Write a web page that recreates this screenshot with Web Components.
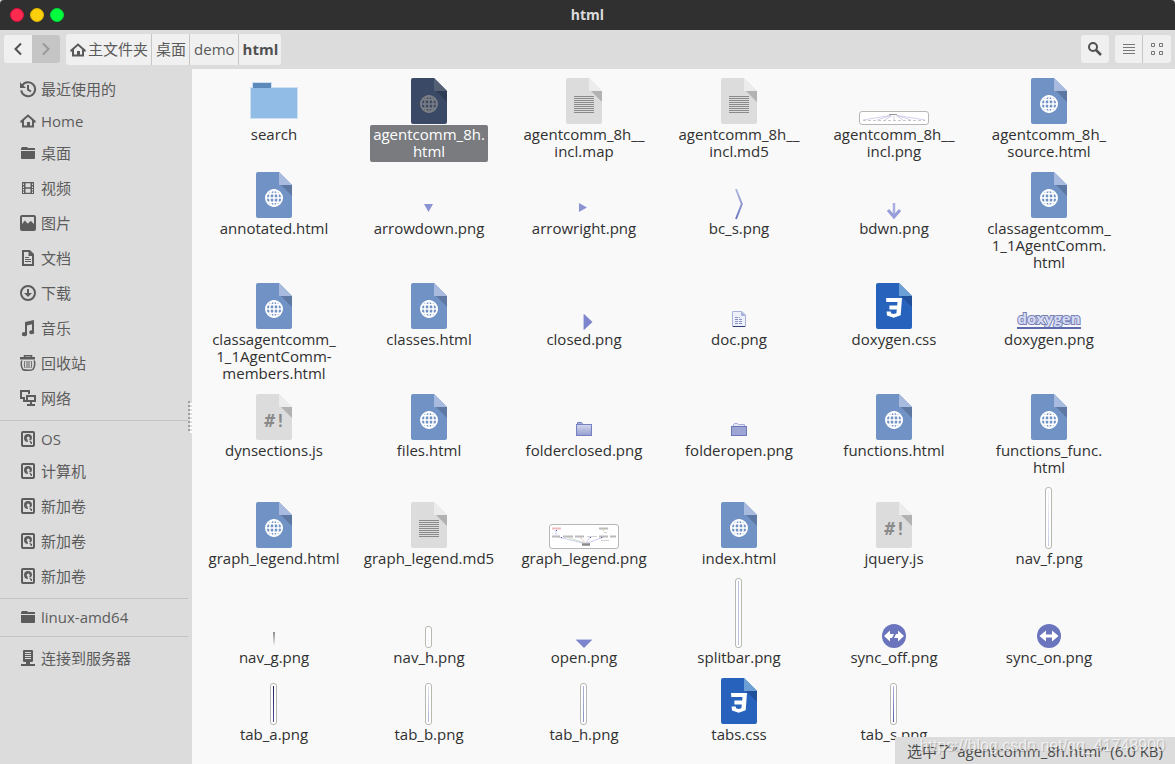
<!DOCTYPE html>
<html lang="zh-CN">
<head>
<meta charset="utf-8">
<title>html</title>
<style>
  html, body { margin: 0; height: 100%; }
  body {
    background: #d4d4d4;
    color: #303030;
    font: 15px/17px "Open Sans", "Noto Sans CJK SC", sans-serif;
  }
</style>
</head>
<body>
<file-window>
  <title-bar slot="title">html</title-bar>
  <tool-bar slot="tools"></tool-bar>
  <places-list slot="places">
    <place-item icon="recent">最近使用的</place-item>
    <place-item icon="home" compact>Home</place-item>
    <place-item icon="folder">桌面</place-item>
    <place-item icon="video">视频</place-item>
    <place-item icon="picture">图片</place-item>
    <place-item icon="document">文档</place-item>
    <place-item icon="download">下载</place-item>
    <place-item icon="music">音乐</place-item>
    <place-item icon="trash">回收站</place-item>
    <place-item icon="network">网络</place-item>
    <place-divider></place-divider>
    <place-item icon="disk" compact>OS</place-item>
    <place-item icon="disk">计算机</place-item>
    <place-item icon="disk">新加卷</place-item>
    <place-item icon="disk">新加卷</place-item>
    <place-item icon="disk">新加卷</place-item>
    <place-divider></place-divider>
    <place-item icon="folder" compact>linux-amd64</place-item>
    <place-divider></place-divider>
    <place-item icon="server">连接到服务器</place-item>
  </places-list>
  <file-grid>
    <file-item icon="dir">search</file-item>
    <file-item icon="html" selected>agentcomm_8h.<br>html</file-item>
    <file-item icon="text">agentcomm_8h__<br>incl.map</file-item>
    <file-item icon="text">agentcomm_8h__<br>incl.md5</file-item>
    <file-item icon="incl">agentcomm_8h__<br>incl.png</file-item>
    <file-item icon="html">agentcomm_8h_<br>source.html</file-item>

    <file-item icon="html">annotated.html</file-item>
    <file-item icon="arrowdown">arrowdown.png</file-item>
    <file-item icon="arrowright">arrowright.png</file-item>
    <file-item icon="crumb">bc_s.png</file-item>
    <file-item icon="bdwn">bdwn.png</file-item>
    <file-item icon="html">classagentcomm_<br>1_1AgentComm.<br>html</file-item>

    <file-item icon="html">classagentcomm_<br>1_1AgentComm-<br>members.html</file-item>
    <file-item icon="html">classes.html</file-item>
    <file-item icon="closed">closed.png</file-item>
    <file-item icon="doc">doc.png</file-item>
    <file-item icon="css">doxygen.css</file-item>
    <file-item icon="doxygen">doxygen.png</file-item>

    <file-item icon="script">dynsections.js</file-item>
    <file-item icon="html">files.html</file-item>
    <file-item icon="folderclosed">folderclosed.png</file-item>
    <file-item icon="folderopen">folderopen.png</file-item>
    <file-item icon="html">functions.html</file-item>
    <file-item icon="html">functions_func.<br>html</file-item>

    <file-item icon="html">graph_legend.html</file-item>
    <file-item icon="text">graph_legend.md5</file-item>
    <file-item icon="legend">graph_legend.png</file-item>
    <file-item icon="html">index.html</file-item>
    <file-item icon="script">jquery.js</file-item>
    <file-item icon="navf">nav_f.png</file-item>

    <file-item icon="navg">nav_g.png</file-item>
    <file-item icon="navh">nav_h.png</file-item>
    <file-item icon="open">open.png</file-item>
    <file-item icon="splitbar">splitbar.png</file-item>
    <file-item icon="syncoff">sync_off.png</file-item>
    <file-item icon="syncon">sync_on.png</file-item>

    <file-item icon="taba">tab_a.png</file-item>
    <file-item icon="tabb">tab_b.png</file-item>
    <file-item icon="tabh">tab_h.png</file-item>
    <file-item icon="css">tabs.css</file-item>
    <file-item icon="tabs">tab_s.png</file-item>
  </file-grid>
  <status-bar slot="status">选中了“agentcomm_8h.html” (6.0 KB)</status-bar>
  <water-mark slot="status">https://blog.csdn.net/qq_41748900</water-mark>
</file-window>

<script>
  /* A sheet of paper with a folded corner, shared by the file types. */
  const page = (base, fold, shade, art) => [48, 48,
    `<path fill="${base}" d="M8 1H29L42 14V45a2 2 0 0 1-2 2H8a2 2 0 0 1-2-2V3a2 2 0 0 1 2-2z"/>
     <path fill="${fold}" d="M29 1V14H42z"/><path fill="${shade}" d="M31 14H42V25z"/>${art}`];

  const globe = c => `<g fill="none" stroke="${c}" stroke-width="1.5">
    <circle cx="24" cy="27" r="8.1" stroke-width="1.8"/><ellipse cx="24" cy="27" rx="4.2" ry="8.2"/>
    <path d="M24 19V35M16 27H32M17 22.8H31M17 31.2H31"/></g>`;

  /* A framed narrow thumbnail with a vertical stripe inside. */
  const strip = (h, top, bottom) => [8, h,
    `<defs><linearGradient id="g" x2="0" y2="1"><stop stop-color="${top}"/><stop offset="1" stop-color="${bottom}"/></linearGradient></defs>
     <rect x=".5" y=".5" width="6" height="${h - 1}" rx="2.5" fill="#fff" stroke="#b6b9b2"/>
     <rect x="3" y="3" width="1" height="${h - 6}" fill="url(#g)"/>`];

  const frame = (h, art) => [70, h,
    `<rect x=".5" y=".5" width="69" height="${h - 1}" rx="2.5" fill="#fff" stroke="#b6b9b2"/>${art}`];

  const lilac = `<defs><linearGradient id="l" x2="0" y2="1"><stop stop-color="#d3d8ee"/><stop offset="1" stop-color="#949dd0"/></linearGradient></defs>`;
  const css3 = `<path fill="#fff" d="M16 16H32L30.7 33.2 23.7 35.8 17 33.4 16.6 29.4H20.8L21 31.2 23.7 32 26.4 31.2 26.8 27.6H19.4V23.6H27.2L27.5 20H16.3z"/>`;
  const lines = [...Array(9)].map((_, i) => `M14 ${19.5 + 2 * i}H34`).join('');

  const ICONS = {
    home: [16, 16, `<path fill="none" stroke="currentColor" stroke-width="2" d="M1 8.7 8 2.6 15 8.7M3 7.5V13.5H13V7.5"/><path fill="currentColor" d="M7 9h3v5H7zM1 7.5h3v2H0zM12 7.5h3l1 2h-4z"/>`],
    recent: [16, 16, `<path fill="none" stroke="currentColor" stroke-width="2" d="M2.2 4.5A7 7 0 1 1 1.2 9.4M8 4V8.6L11 10.5"/><path fill="currentColor" d="M0 1V7H6L4.2 5.2 2.2 3.4z"/>`],
    folder: [16, 16, `<path fill="currentColor" d="M1 3.5 2 2H7L8 3H15V5H1zM1 6H15V13.3a.7.7 0 0 1-.7.7H1.7a.7.7 0 0 1-.7-.7z"/>`],
    video: [16, 16, `<path fill="currentColor" fill-rule="evenodd" d="M2 2H14V14H2zM3 3.4V5H4V3.4zM3 6.4V8H4V6.4zM3 9V10.500H4V9zM3 11.500V13H4V11.500zM12 3.400V5H13V3.400zM12 6.400V8H13V6.400zM12 9V10.500H13V9zM12 11.500V13H13V11.500zM5.500 3.200V7.200H10.500V3.200zM5.500 8.800V12.800H10.500V8.800z"/>`],
    picture: [16, 16, `<path fill="currentColor" fill-rule="evenodd" d="M2 0H14a2 2 0 0 1 2 2V14a2 2 0 0 1-2 2H2a2 2 0 0 1-2-2V2A2 2 0 0 1 2 0zM2 2V9L4 6.500 5 5.500 7 8 8 8.500 10 6.500 11 6 14 9V2z"/>`],
    document: [16, 16, `<path fill="none" stroke="currentColor" stroke-width="2" d="M3 1H9.500L13 4.500V15H3z"/><path fill="currentColor" d="M8.500 1V6H13.500zM5 7H9V8H5zM5 9H11V10H5zM5 11H11V12H5z"/>`],
    download: [16, 16, `<circle cx="8" cy="8" r="7" fill="none" stroke="currentColor" stroke-width="2"/><path fill="currentColor" d="M7 4H9V8H12L8 12 4 8H7z"/>`],
    music: [16, 16, `<path fill="currentColor" d="M5 2 14 0V11.500A2.500 2 0 1 1 12 10.200V4.300L7 5.500V13.800A2.600 2.100 0 1 1 5 12.200z"/>`],
    trash: [16, 16, `<path fill="none" stroke="currentColor" stroke-width="1.500" d="M4.500 2V.8H11.500V2M1.800 5.500C.8 8 1.500 12 2.800 14.500 4.500 15.600 11.500 15.600 13 14.500 14.500 12 15 8 14.200 5.500"/><path fill="none" stroke="currentColor" d="M5 6C4 8 4.300 11 5 13M11 6C12 8 11.700 11 11 13M7 6V13M9 6V13"/><path fill="currentColor" d="M0 2H15V4.500H0z"/>`],
    network: [16, 16, `<path fill="none" stroke="currentColor" stroke-width="2" d="M5 8H1V1H9V4M7 6H15V11H7zM3 11H6M11 11V15M7 15H15"/><path fill="currentColor" d="M3 8H5V11H3z"/>`],
    disk: [16, 16, `<rect x="2" y="1" width="12" height="14" rx="1" fill="none" stroke="currentColor" stroke-width="2"/><path fill="currentColor" fill-rule="evenodd" d="M8 3a4 4 0 0 1 4 4L11 9.500 9 8.500A1.500 1.500 0 1 0 7.500 8.500L8 11A4 4 0 0 1 8 3zM9 9.500 12 11V13H11z"/>`],
    server: [16, 16, `<path fill="currentColor" fill-rule="evenodd" d="M4 0H12a1 1 0 0 1 1 1V11a1 1 0 0 1-1 1H10V14H15V16H1V14H6V12H4a1 1 0 0 1-1-1V1A1 1 0 0 1 4 0zM5 2V3H11V2zM5 4V5H11V4zM5 6V7H11V6zM5 8V9H11V8z"/>`],
    back: [16, 16, `<path fill="none" stroke="currentColor" stroke-width="2" d="M11 2.500 5.500 8 11 13.500"/>`],
    forward: [16, 16, `<path fill="none" stroke="currentColor" stroke-width="2" d="M5 2.500 10.500 8 5 13.500"/>`],
    find: [16, 16, `<circle cx="6" cy="6" r="4" fill="none" stroke="currentColor" stroke-width="2"/><path stroke="currentColor" stroke-width="2.500" d="M9 9 14 14"/>`],
    list: [16, 16, `<path stroke="currentColor" d="M2 3.500H14M2 6.500H14M2 9.500H14M2 12.500H14"/>`],
    tiles: [16, 16, `<path fill="none" stroke="currentColor" d="M2.500 2.500H5.500V5.500H2.500zM10.500 2.500H13.500V5.500H10.500zM2.500 10.500H5.500V13.500H2.500zM10.500 10.500H13.500V13.500H10.500z"/>`],

    dir: [48, 48, `<path fill="#cfe0f2" d="M2 5H22V10H48V42H0V10H2z"/><path fill="#5b89b9" d="M3 6H21V11H3z"/><path fill="#91bce6" d="M1 11H47V41H1z"/>`],
    html: page('#7092c5', '#a8bbdf', '#5d79a3', globe('#fff')),
    'html-selected': page('#3a4a66', '#535f72', '#303c53', globe('#7c7f84')),
    text: page('#dcdcdc', '#ececec', '#b2b2b2', `<path stroke="#8a8a8a" d="${lines}"/>`),
    script: page('#dcdcdc', '#ececec', '#b2b2b2', `<text x="25" y="34" text-anchor="middle" font-family="DejaVu Sans Mono, monospace" font-weight="700" font-size="18" fill="#8a8a8a">#!</text>`),
    css: page('#2762bd', '#6b9fd6', '#1f5099', css3),

    incl: frame(14, `<path fill="none" stroke="#c0bde0" stroke-width=".7" d="M31 4.500 4 9M32 4.500 18 9M33 4.500 26 9M35 4.500V9M37 4.500 44 9M38 4.500 52 9M39 4.500 66 9"/><path stroke="#999" d="M30 3.500H38"/><path stroke="#bbb" stroke-dasharray="3 2" stroke-width=".8" d="M4 9.500H66"/>`),
    legend: frame(25, `<path fill="none" stroke="#9ac79a" stroke-width=".5" d="M35 19 18 13"/><path fill="none" stroke="#9a9ae0" stroke-width=".5" d="M34 19 9 13M37 19 41 13M38 19 55 13M7 11V6"/><path fill="none" stroke="#d68a8a" stroke-width=".5" d="M36 19 31 13"/><path stroke="#eebcbc" stroke-width="2" d="M3 4.500H12"/><path stroke="#bbb" stroke-width="2" d="M50 4.500H59M3 12.500H11M14 12.500H24M26 12.500H35M50 12.500H59M61 12.500H67"/><path stroke="#bbb" stroke-width=".7" d="M38 12.500H48M52 16.500H60M55 8.500H58"/><path stroke="#888" stroke-width="2.500" d="M33 20.500H41"/><path fill="#e8c060" d="M54 6h1v1h-1z"/><path fill="#5555b8" d="M7 6h1v1H7zM41 13h1v1h-1zM12 13h1v1h-1zM52 13h1v1h-1z"/>`),
    arrowdown: [16, 22, `<path fill="#8b93d3" d="M3 7H12L7.500 15z"/>`],
    arrowright: [16, 22, `<path fill="#8b93d3" d="M3 6 11 10.500 3 15z"/>`],
    crumb: [8, 30, `<defs><linearGradient id="c" x2="0" y2="1"><stop stop-color="#b3badf"/><stop offset="1" stop-color="#6974bd"/></linearGradient></defs><path fill="none" stroke="url(#c)" stroke-width="2" d="M1 0 6.800 15 1 30"/>`],
    bdwn: [14, 16, `<path fill="none" stroke="#a9afe0" stroke-width="2.500" d="M7 0V13"/><path fill="none" stroke="#969dd8" stroke-width="3" d="M1 7 7 14 13 7"/>`],
    closed: [20, 16, `<path fill="#c3c8e8" d="M9 0 11 1V15L9 16z"/><path fill="#7d86cd" d="M10 0 18.500 8 10 16z"/>`],
    open: [16, 10, `<path fill="#c3c8e8" d="M0 1H16L15 3H1z"/><path fill="#7d86cd" d="M0 2H16L8 10z"/>`],
    doc: [24, 22, `${lilac}<path fill="#eef1fa" stroke="#a9b2da" d="M5.500 3.500H15L18.500 7V18.500H5.500z"/><path fill="url(#l)" stroke="#a9b2da" d="M14.500 3.500V7.500H18.500"/><path stroke="#8791c4" stroke-dasharray="3 1" d="M8 9.500H13M8 11.500H16M8 13.500H15M8 15.500H16"/><path stroke="#353c78" d="M6 18.500H18"/>`],
    folderclosed: [24, 22, `${lilac}<path fill="#aab1dc" stroke="#7480c0" d="M5.500 6V3.500H9.500L10.500 5"/><rect x="4.500" y="5.500" width="15" height="11" fill="url(#l)" stroke="#7480c0"/>`],
    folderopen: [24, 22, `${lilac}<path fill="#e3e6f5" stroke="#a6aed8" d="M6.500 9V5.500L7.500 4.500H10.500L11.500 5.500H17.500V9"/><rect x="4.500" y="7.500" width="15" height="9" fill="#9ca5d4" stroke="#6d78bb"/>`],
    doxygen: [66, 18, `<text x="33" y="12" text-anchor="middle" font-family="Open Sans, sans-serif" font-weight="700" font-size="15" fill="#d5dbf5" stroke="#7880b4" stroke-width="2" paint-order="stroke">doxygen</text><path fill="#5f69ae" d="M1 15H65V17H1z"/>`],
    navf: strip(62, '#f4f5fb', '#c9cde6'),
    navh: strip(22, '#fdfdff', '#eeeff8'),
    splitbar: strip(70, '#bac2e4', '#bac2e4'),
    taba: strip(42, '#20254f', '#4a5292'),
    tabb: strip(42, '#e0e4f2', '#aeb6da'),
    tabh: strip(42, '#aab3d8', '#8a95c8'),
    tabs: strip(42, '#b0b5da', '#525ba5'),
    navg: [8, 16, `<defs><linearGradient id="n" x2="0" y2="1"><stop stop-color="#8c8c8c"/><stop offset="1" stop-color="#ededed"/></linearGradient></defs><rect x="3" width="2" height="13" fill="url(#n)"/>`],
    syncoff: [24, 24, `<circle cx="12" cy="12" r="12" fill="#6b75bd"/><path fill="#fff" d="M2 12 8 6.500V10H12L10 14H8V17.500zM22 12 16 6.500V10H14L12 14H16V17.500z"/>`],
    syncon: [24, 24, `<circle cx="12" cy="12" r="12" fill="#6b75bd"/><path fill="#fff" d="M2.500 12 9 6.500V10.500H15V6.500L21.500 12 15 17.500V13.500H9V17.500z"/>`]
  };

  /* Registers an element; setup fills in the markup before it is attached. */
  const define = (name, markup, setup) => {
    const template = document.createElement('template');
    template.innerHTML = markup;
    customElements.define(name, class extends HTMLElement {
      connectedCallback() {
        if (this.shadowRoot) return;
        const content = template.content.cloneNode(true);
        if (setup) setup(this, content);
        this.attachShadow({ mode: 'open' }).append(content);
      }
    });
  };

  define('glyph-icon', `<style>
    :host { display: block; flex: none; }
    svg { display: block; overflow: visible; }
  </style><svg aria-hidden="true"></svg>`, (host, content) => {
    const [w, h, art] = ICONS[host.getAttribute('name')];
    const svg = content.querySelector('svg');
    svg.setAttribute('width', w);
    svg.setAttribute('height', h);
    svg.setAttribute('viewBox', `0 0 ${w} ${h}`);
    svg.innerHTML = art;
  });

  define('file-window', `<style>
    :host { display: grid; grid-template: auto auto 1fr / 192px 1fr; min-height: 100vh; position: relative; overflow: hidden; }
    .top { grid-column: 1 / -1; }
    aside { background: #dcdcdc; display: flex; position: relative; }
    .grip { position: absolute; right: 0; top: 332px; width: 4px; height: 32px;
      background: radial-gradient(circle at 1px 1px, #a0a0a0 1px, transparent 1px) 0 0 / 4px 4px,
                  radial-gradient(circle at 3px 3px, #fff 1px, transparent 1px) 0 0 / 4px 4px; }
    main { background: #f9f9f9; }
    footer { position: absolute; right: 0; bottom: 0; }
  </style>
  <div class="top"><slot name="title"></slot></div>
  <div class="top"><slot name="tools"></slot></div>
  <aside><slot name="places"></slot><div class="grip"></div></aside>
  <main><slot></slot></main>
  <footer><slot name="status"></slot></footer>`);

  define('title-bar', `<style>
    :host { display: grid; grid-template-columns: 1fr auto 1fr; align-items: center; height: 30px; background: #303030; border-radius: 4px 4px 0 0; }
    .lights { display: flex; gap: 6px; padding-left: 10px; }
    button { width: 14px; height: 14px; padding: 0; border: 1px solid; border-radius: 50%; }
    .close { background: #ff2a50; border-color: #d81040; }
    .min { background: #fbd00a; border-color: #dcb400; }
    .max { background: #00ff3c; border-color: #00d838; }
    h1 { margin: 0; font-size: 14px; line-height: 20px; font-weight: 700; color: #dcdcdc; }
  </style>
  <div class="lights"><button class="close" aria-label="关闭"></button><button class="min" aria-label="最小化"></button><button class="max" aria-label="最大化"></button></div>
  <h1><slot></slot></h1>`);

  define('tool-bar', `<style>
    :host { display: flex; align-items: center; height: 39px; padding: 0 4px; background: #dcdcdc; color: #505050; box-sizing: border-box; }
    button, nav a { display: flex; align-items: center; justify-content: center; box-sizing: border-box; background: #f0f0f0; color: inherit; }
    button { width: 28px; height: 28px; margin: 0 0 1px; padding: 0; border: 0; border-radius: 3px; }
    .group { display: flex; }
    .group button:first-child { border-radius: 3px 0 0 3px; }
    .group button:last-child { border-radius: 0 3px 3px 0; }
    .group button:disabled { background: #c5c5c5; color: #999; }
    nav { display: flex; margin-left: 6px; border-radius: 3px; overflow: hidden; }
    nav a { height: 31px; padding: 0 3px 0 4px; gap: 2px; text-decoration: none; border-right: 1px solid #c6c6c6; color: #5a5a5a; }
    nav a:last-child { border: 0; font-weight: 700; color: #505050; }
    .right { display: flex; gap: 6px; margin-left: auto; }
    .views button { color: #777; }
    .views button:first-child { border-right: 1px solid #c6c6c6; }
  </style>
  <div class="group"><button aria-label="后退"><glyph-icon name="back"></glyph-icon></button><button aria-label="前进" disabled><glyph-icon name="forward"></glyph-icon></button></div>
  <nav aria-label="路径"><a href="#home"><glyph-icon name="home"></glyph-icon>主文件夹</a><a href="#desktop">桌面</a><a href="#demo">demo</a><a href="#html">html</a></nav>
  <div class="right"><button aria-label="搜索"><glyph-icon name="find"></glyph-icon></button>
  <div class="group views"><button aria-label="列表"><glyph-icon name="list"></glyph-icon></button><button aria-label="图标"><glyph-icon name="tiles"></glyph-icon></button></div></div>`);

  define('places-list', `<style>
    :host { display: block; flex: 1; padding: 3px 4px 0 0; color: #5c5c5c; }
  </style><nav aria-label="位置"><slot></slot></nav>`);

  define('place-item', `<style>
    :host { display: block; }
    a { display: flex; align-items: center; gap: 5px; height: 35px; padding-left: 20px; color: inherit; text-decoration: none; white-space: nowrap; }
    :host([compact]) a { height: 29px; }
    glyph-icon { margin-bottom: 2px; }
  </style><a href="#place"><glyph-icon></glyph-icon><span><slot></slot></span></a>`, (host, content) => {
    content.querySelector('glyph-icon').setAttribute('name', host.getAttribute('icon'));
  });

  define('place-divider', `<style>
    :host { display: block; height: 1px; margin: 4px 0; background: #c3c3c3; }
  </style>`);

  define('file-grid', `<style>
    :host { display: grid; grid-template-columns: repeat(auto-fill, 154px); column-gap: 1px; row-gap: 9px; align-items: baseline; padding: 8px 0 0 5px; }
  </style><slot></slot>`);

  define('file-item', `<style>
    :host { display: flex; flex-direction: column; align-items: center; }
    span { padding: 1px 3px 2px; border-radius: 2px; text-align: center; white-space: nowrap; }
    :host([selected]) span { background: #797b7f; color: #fff; }
  </style><glyph-icon></glyph-icon><span><slot></slot></span>`, (host, content) => {
    const selected = host.hasAttribute('selected') ? '-selected' : '';
    content.querySelector('glyph-icon').setAttribute('name', host.getAttribute('icon') + selected);
  });

  define('status-bar', `<style>
    :host { display: block; padding: 6px 12px 4px; background: #dcdcdc; color: #4c4c4c; white-space: nowrap; }
  </style><slot></slot>`);

  define('water-mark', `<style>
    :host { position: absolute; right: 10px; top: 0; font: 16px/18px "Liberation Sans", sans-serif; color: rgba(255, 255, 255, .7); text-shadow: 1px 1px 1px rgba(0, 0, 0, .2); white-space: nowrap; pointer-events: none; }
  </style><slot></slot>`);
</script>
</body>
</html>
